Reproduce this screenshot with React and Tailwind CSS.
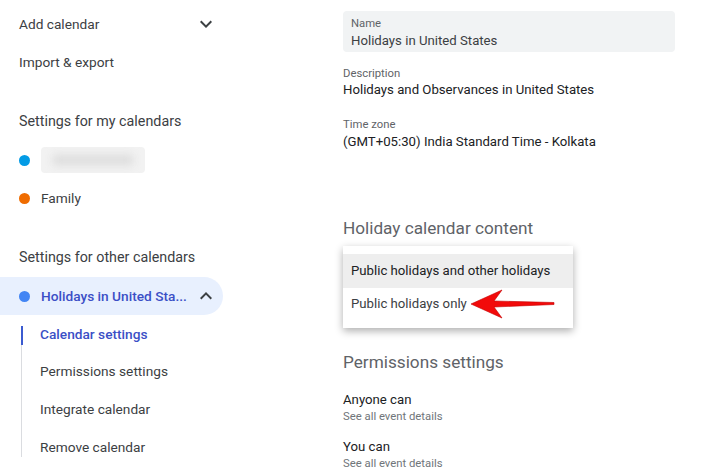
import React from "react";

const font = { fontFamily: "Roboto, 'Liberation Sans', sans-serif" };

const ExpandMore = ({ up }) => (
    <svg width="24" height="24" viewBox="0 0 24 24" className={up ? "rotate-180" : ""}>
        <path d="M16.59 8.59L12 13.17 7.41 8.59 6 10l6 6 6-6z" fill="#3c4043" />
    </svg>
);

const Dot = ({ color }) => <span className={`w-[11px] h-[11px] rounded-full shrink-0 ${color}`} />;

const RedArrow = () => (
    <svg width="86" height="32" viewBox="0 0 86 32" className="ml-[4px] -my-[8px]">
        <polygon
            points="0,16 31,2 23,13 83,14.5 83,16.5 23,19 31,30"
            fill="#f20a0a"
            stroke="#c40000"
            strokeWidth="0.6"
            strokeLinejoin="round"
        />
    </svg>
);

const Sidebar = () => (
    <div className="w-[223px] shrink-0 pt-[5px] text-[13.7px] text-[#3c4043]">
        <div className="h-[38px] flex items-center justify-between pl-[19px] pr-[5px]">
            <span>Add calendar</span>
            <ExpandMore />
        </div>
        <div className="h-[38px] flex items-center pl-[19px]">Import &amp; export</div>

        <div className="h-[38px] mt-[22px] flex items-center pl-[19px] text-[14.3px]">Settings for my calendars</div>
        <div className="h-[38px] flex items-center gap-[11px] pl-[19px]">
            <Dot color="bg-[#039be5]" />
            <div className="w-[104px] h-[26px] rounded-[4px] bg-[#f2f2f2] flex items-center justify-center overflow-hidden">
                <div className="w-[80px] h-[10px] bg-[#dcdcdc] blur-[4px]" />
            </div>
        </div>
        <div className="h-[38px] flex items-center gap-[11px] pl-[19px]">
            <Dot color="bg-[#ef6c00]" />
            <span>Family</span>
        </div>

        <div className="h-[38px] mt-[22px] flex items-center pl-[19px] text-[14.3px]">Settings for other calendars</div>
        <div className="h-[38px] flex items-center pl-[19px] pr-[5px] bg-[#e8f0fe] rounded-r-full">
            <Dot color="bg-[#4285f4]" />
            <span className="ml-[11px] flex-1 font-medium text-[#3b4fc6] whitespace-nowrap">Holidays in United Sta...</span>
            <ExpandMore up />
        </div>

        <div className="relative ml-[21px] pl-[19px]">
            <div className="absolute left-0 top-[11px] bottom-[9px] w-px bg-[#dadce0]" />
            <div className="absolute left-0 top-[11px] h-[19px] w-[2px] bg-[#3b5bd0]" />
            <div className="h-[38px] flex items-center font-medium text-[#3b4fc6]">Calendar settings</div>
            <div className="h-[37px] flex items-center">Permissions settings</div>
            <div className="h-[38px] flex items-center">Integrate calendar</div>
            <div className="h-[38px] flex items-center">Remove calendar</div>
        </div>
    </div>
);

const Main = () => (
    <div className="ml-[120px] w-[332px] pt-[11px] text-[#3c4043]">
        <div className="h-[41px] rounded-[4px] bg-[#f1f3f4] px-[8px] pt-[6px]">
            <div className="text-[11.3px] leading-[14px] text-[#5f6368]">Name</div>
            <div className="text-[13.2px] leading-[20px]">Holidays in United States</div>
        </div>

        <div className="mt-[15px] text-[11.3px] leading-[14px] text-[#5f6368]">Description</div>
        <div className="mt-[1px] text-[13.2px] leading-[16px] text-[#202124]">Holidays and Observances in United States</div>

        <div className="mt-[20px] text-[11.3px] leading-[14px] text-[#5f6368]">Time zone</div>
        <div className="mt-[2px] text-[13.2px] leading-[16px] text-[#202124]">(GMT+05:30) India Standard Time - Kolkata</div>

        <h2 className="mt-[66px] text-[17.2px] leading-[24px] text-[#5f6368]">Holiday calendar content</h2>

        <div className="mt-[6px] w-[230px] bg-white py-[8px] text-[13.2px] shadow-[0_3px_8px_rgba(0,0,0,0.32)]">
            <div className="h-[34px] flex items-center px-[8px] bg-[#eeeeee] text-[#202124]">Public holidays and other holidays</div>
            <div className="h-[32px] flex items-center px-[8px] text-[#3c4043] whitespace-nowrap">
                <span>Public holidays only</span>
                <RedArrow />
            </div>
        </div>

        <h2 className="mt-[22px] text-[17.2px] leading-[24px] text-[#5f6368]">Permissions settings</h2>

        <div className="mt-[17px] text-[13.2px] leading-[18px] text-[#202124]">Anyone can</div>
        <div className="mt-[1px] text-[11.3px] leading-[14px] text-[#70757a]">See all event details</div>

        <div className="mt-[14px] text-[13.2px] leading-[18px] text-[#202124]">You can</div>
        <div className="mt-[1px] text-[11.3px] leading-[14px] text-[#70757a]">See all event details</div>
    </div>
);

export default function App() {
    return (
        <div className="w-[710px] h-[472px] overflow-hidden bg-white flex" style={font}>
            <Sidebar />
            <Main />
        </div>
    );
}
